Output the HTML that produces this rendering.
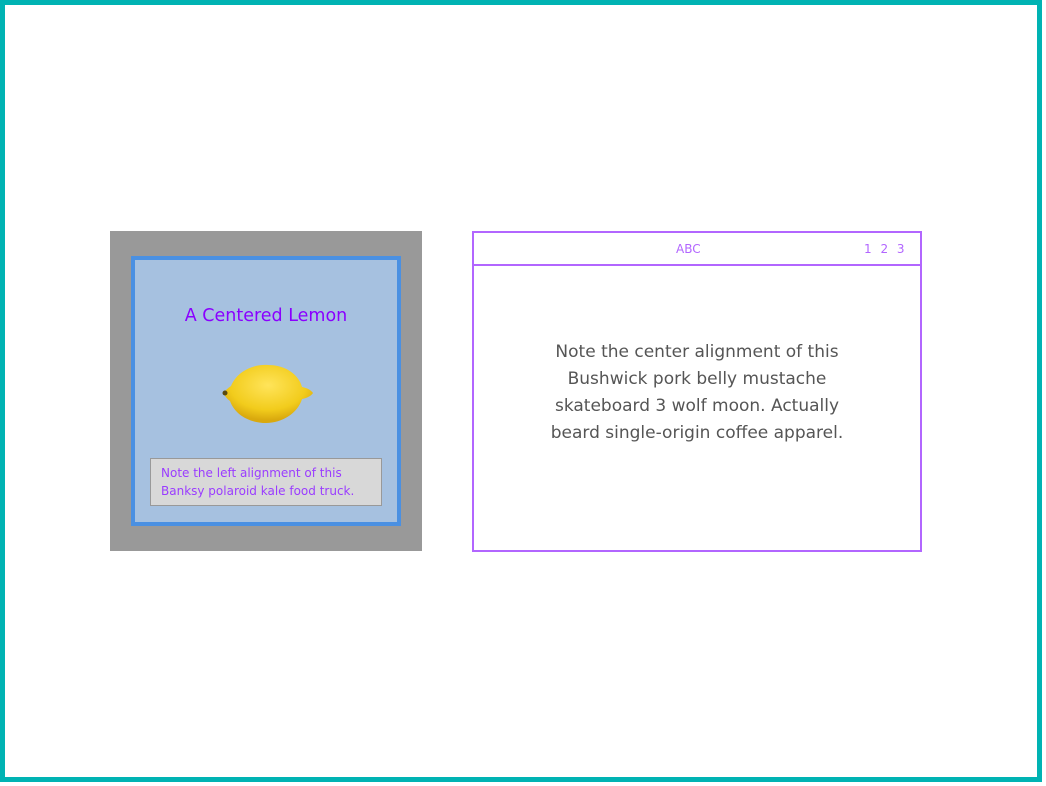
<html><head><style>
body{margin:0;width:1046px;height:786px;overflow:hidden;background:#fff;font-family:"DejaVu Sans","Liberation Sans",sans-serif;}
.frame{position:absolute;left:0;top:0;width:1032px;height:772px;border:5px solid #00b3b3;}
.gray{position:absolute;left:110px;top:231px;width:312px;height:320px;background:#999;}
.blue{position:absolute;left:131px;top:256px;width:262px;height:262px;border:4px solid #4a90e2;background:#a6c1e0;}
.title{position:absolute;left:0;width:100%;top:46px;text-align:center;color:#8a00ff;font-size:17.5px;}
.cap{position:absolute;left:15px;top:198px;padding:5px 0 0 10px;background:#d8d8d8;border:1px solid #999;color:#9a3cff;font-size:12px;line-height:18px;box-sizing:border-box;width:232px;height:48px;}
.right{position:absolute;left:472px;top:231px;width:446px;height:317px;border:2px solid #b266ff;}
.hdr{position:absolute;left:0;top:0;width:100%;height:31px;border-bottom:2px solid #b266ff;color:#b266ff;font-size:12px;}
.body{position:absolute;left:0;top:106px;width:100%;text-align:center;color:#555;font-size:17px;line-height:27px;}
</style></head><body>
<div class="frame"></div>
<div class="gray"></div>
<div class="blue">
<div class="title">A Centered Lemon</div>
<svg style="position:absolute;left:85px;top:101px" width="96" height="66" viewBox="0 0 96 66" preserveAspectRatio="none">
<defs><radialGradient id="g" cx="0.5" cy="0.35" r="0.6"><stop offset="0" stop-color="#ffe45a"/><stop offset="0.7" stop-color="#f2cc1c"/><stop offset="1" stop-color="#d9a90e"/></radialGradient></defs>
<path d="M3 32 C6 29 8 27 11 25 C17 10 34 3 48 4 C64 4 78 12 82 26 C87 27 91 29 93 32 C91 35 87 37 82 38 C78 52 62 62 46 62 C30 62 15 54 10 40 C7 38 5 35 3 32 Z" fill="url(#g)"/>
<circle cx="5" cy="32" r="2.5" fill="#5a4a10"/>
</svg>
<div class="cap">Note the left alignment of this<br>Banksy polaroid kale food truck.</div>
</div>
<div class="right">
<div class="hdr"><span style="position:absolute;left:202px;top:9px">ABC</span><span style="position:absolute;left:390px;top:9px;word-spacing:5px">1 2 3</span></div>
<div class="body">Note the center alignment of this<br>Bushwick pork belly mustache<br>skateboard 3 wolf moon. Actually<br>beard single-origin coffee apparel.</div>
</div>
</body></html>
